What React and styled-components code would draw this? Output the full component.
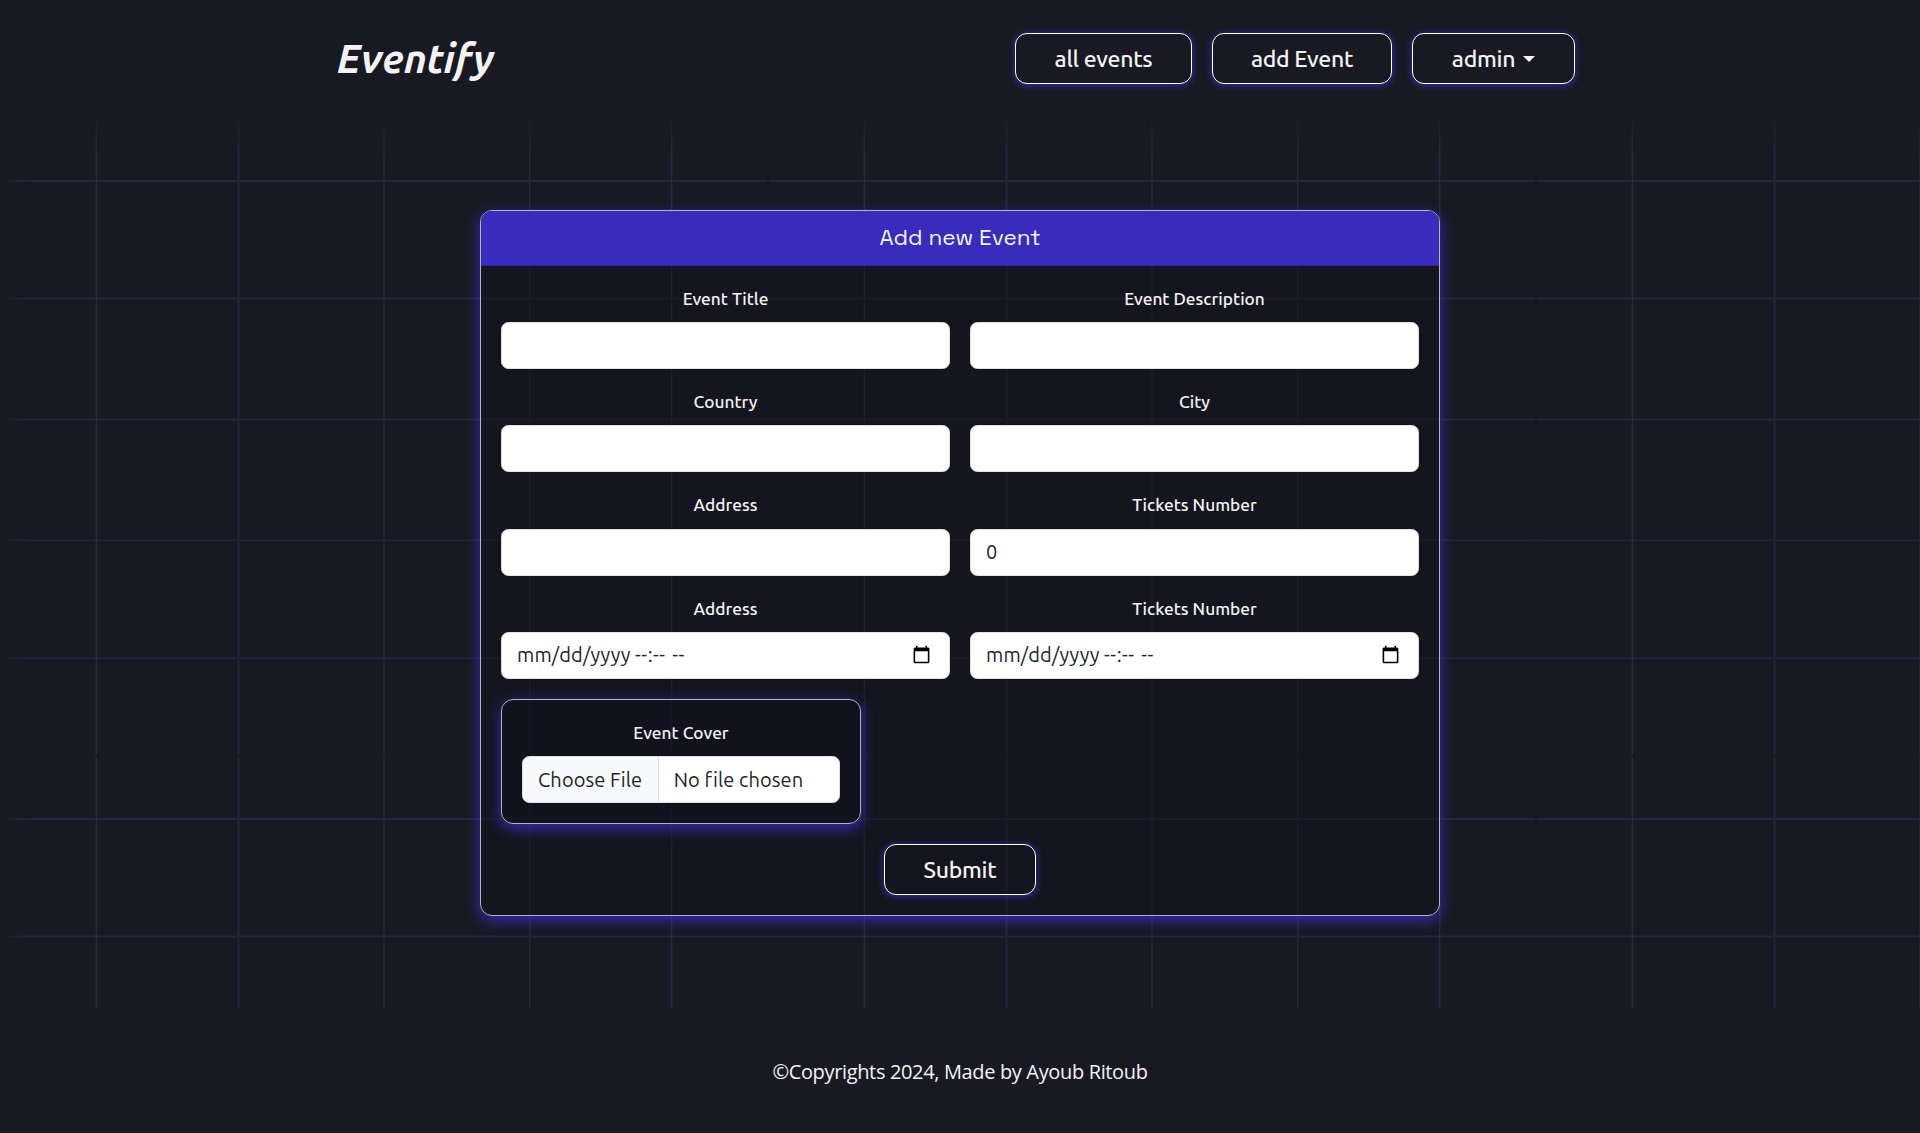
import React from "react";
import styled, { createGlobalStyle } from "styled-components";

const GlobalStyle = createGlobalStyle`
  *, *::before, *::after { box-sizing: border-box; }
  body {
    margin: 0;
    background: #191923;
    color: #f3f3f3;
    font-family: Ubuntu, "Noto Sans", "Open Sans", sans-serif;
    font-size: 20px;
    line-height: 1.5;
  }
`;

const Page = styled.div`
  min-height: 1133px;
  display: flex;
  flex-direction: column;
`;

const Header = styled.header`
  height: 118px;
  padding: 0 345px 1px 337px;
  display: flex;
  align-items: center;
  justify-content: space-between;
`;

const Brand = styled.a`
  font-size: 40.3px;
  font-weight: 700;
  font-style: italic;
  line-height: 1;
`;

const Nav = styled.nav`
  display: flex;
  gap: 20px;
`;

const Button = styled.button`
  width: ${(p) => p.$width}px;
  height: 51px;
  padding: 0;
  display: flex;
  align-items: center;
  justify-content: center;
  gap: 8px;
  background: transparent;
  border: 1px solid #ffffff;
  border-radius: 12px;
  box-shadow: 0 1px 7px #382cbc;
  color: #f3f3f3;
  font: 500 23px/30px Ubuntu, "Noto Sans", "Open Sans", sans-serif;
  letter-spacing: -0.3px;
`;

const Caret = styled.span`
  border-top: 6px solid #f3f3f3;
  border-left: 6px solid transparent;
  border-right: 6px solid transparent;
`;

const strong = "#2b2849";
const medium = "#272541";
const soft = "#1f1e2f";
const band = (dir, start, colors) =>
  `linear-gradient(${dir}, transparent ${start}px, ${colors
    .map((c, i) => `${c} ${start + i}px, ${c} ${start + i + 1}px`)
    .join(", ")}, transparent ${start + colors.length}px)`;
const vLine = (x, ...colors) => band("to right", x, colors);
const hLine = (y, ...colors) => band("to bottom", y, colors);

const gridLines = [
  vLine(95, soft, strong),
  vLine(237, soft, medium, soft),
  vLine(383, "#232037", "#232037"),
  vLine(529, medium, soft),
  vLine(671, strong, soft),
  hLine(62, medium, medium),
  hLine(179, soft, medium, soft),
  hLine(300, soft, medium, soft),
  hLine(421, soft, medium),
  hLine(539, soft, medium),
];

const Main = styled.main`
  height: 890px;
  display: flex;
  justify-content: center;
  align-items: flex-start;
  padding-top: 92px;
  background-image:
    linear-gradient(to bottom, rgba(25, 25, 35, 0.85), rgba(25, 25, 35, 0) 38px),
    linear-gradient(to right, #191923, rgba(25, 25, 35, 0) 30px),
    linear-gradient(to right, #191923 1px, transparent 1px, transparent 767px, #191923 767px),
    linear-gradient(to bottom, #191923 1px, transparent 1px, transparent 637px, #191923 637px),
    ${gridLines.join(", ")};
  background-size: 100% 100%, 100% 100%, 768px 638px, 768px 638px,
    ${gridLines.map(() => "768px 638px").join(", ")};
`;

const Card = styled.form`
  width: 960px;
  height: 706px;
  margin: 0;
  display: flex;
  flex-direction: column;
  border: 1px solid #b4b4b8;
  border-radius: 12px;
  background: rgba(17, 17, 28, 0.5);
  box-shadow: 0 4px 14px #382cbc;
`;

const CardHeader = styled.div`
  height: 55px;
  flex-shrink: 0;
  border-bottom: 1px solid #3025a5;
  border-radius: 11px 11px 0 0;
  background: #382cbc;
  display: flex;
  align-items: center;
  justify-content: center;
  font-family: "Space Grotesk", Inter, "Liberation Sans", sans-serif;
  font-size: 22.5px;
`;

const CardBody = styled.div`
  padding: 19.75px 20px 20px;
  display: flex;
  flex-direction: column;
  align-items: center;
`;

const Fields = styled.div`
  width: 100%;
  display: grid;
  grid-template-columns: 1fr 1fr;
  gap: 20.1px 20px;
`;

const Field = styled.label`
  display: flex;
  flex-direction: column;
  align-items: center;
`;

const Label = styled.span`
  height: 28.25px;
  margin-bottom: 8px;
  font-size: 17.3px;
  font-weight: 500;
  line-height: 25px;
`;

const Input = styled.input`
  width: 100%;
  height: 47px;
  padding: 7px 15px 8px;
  border: 1px solid #dee2e6;
  border-radius: 7.5px;
  background: #fff;
  color: #212529;
  font: 400 20px/30px Ubuntu, "Noto Sans", "Open Sans", sans-serif;
  letter-spacing: 0.1px;
  outline: none;
  appearance: none;

  &::-webkit-inner-spin-button {
    display: none;
  }
`;

const DateBox = styled.div`
  width: 100%;
  height: 47px;
  padding: 0 18px 1px 15px;
  display: flex;
  align-items: center;
  border: 1px solid #dee2e6;
  border-radius: 7.5px;
  background: #fff;
  color: #212529;

  svg {
    margin-left: auto;
    margin-bottom: 1px;
  }
`;

const DatePart = styled.span`
  margin-left: ${(p) => p.$gap || 0}px;
  letter-spacing: ${(p) => (p.$gap ? "0.5px" : "0.15px")};
`;

const CoverBox = styled.div`
  width: 360px;
  height: 125px;
  margin-top: 20px;
  padding: 20px;
  align-self: flex-start;
  border: 1px solid #b4b4b8;
  border-radius: 12px;
  background: rgba(16, 16, 30, 0.5);
  box-shadow: 0 4px 14px #382cbc;
`;

const FileInput = styled(Input)`
  padding: 7.5px 15px;
  overflow: hidden;

  &::file-selector-button {
    padding: 7.5px 16px 7.5px 15px;
    margin: -7.5px 14.5px -7.5px -15px;
    border: 0 solid #dee2e6;
    border-right-width: 1px;
    background: #f8f9fa;
    color: #212529;
    font: inherit;
    letter-spacing: inherit;
  }
`;

const SubmitRow = styled.div`
  margin-top: 20px;
`;

const Footer = styled.footer`
  flex: 1;
  padding-top: 2px;
  display: flex;
  align-items: center;
  justify-content: center;
  font-family: "Segoe UI", "Open Sans", sans-serif;
  font-size: 20px;
  letter-spacing: -0.35px;
`;

const CalendarIcon = () => (
  <svg width="19" height="19" viewBox="0 0 24 24" fill="#000">
    <path d="M20 3h-1V1h-2v2H7V1H5v2H4c-1.1 0-2 .9-2 2v16c0 1.1.9 2 2 2h16c1.1 0 2-.9 2-2V5c0-1.1-.9-2-2-2zm0 18H4V8h16v13z" />
  </svg>
);

const DateInput = () => (
  <DateBox>
    <DatePart>mm/dd/yyyy</DatePart>
    <DatePart $gap={4.5}>--:--</DatePart>
    <DatePart $gap={6.5}>--</DatePart>
    <CalendarIcon />
  </DateBox>
);

const fields = [
  { label: "Event Title", type: "text" },
  { label: "Event Description", type: "text" },
  { label: "Country", type: "text" },
  { label: "City", type: "text" },
  { label: "Address", type: "text" },
  { label: "Tickets Number", type: "number", value: "0" },
  { label: "Address", type: "date" },
  { label: "Tickets Number", type: "date" },
];

export default function App() {
  return (
    <Page>
      <GlobalStyle />
      <Header>
        <Brand>Eventify</Brand>
        <Nav>
          <Button $width={177}>all events</Button>
          <Button $width={180}>add Event</Button>
          <Button $width={163}>admin <Caret /></Button>
        </Nav>
      </Header>
      <Main>
        <Card>
          <CardHeader>Add new Event</CardHeader>
          <CardBody>
            <Fields>
              {fields.map((f, i) => (
                <Field key={i}>
                  <Label>{f.label}</Label>
                  {f.type === "date" ? (
                    <DateInput />
                  ) : (
                    <Input type={f.type} defaultValue={f.value} />
                  )}
                </Field>
              ))}
            </Fields>
            <CoverBox>
              <Field>
                <Label>Event Cover</Label>
                <FileInput type="file" />
              </Field>
            </CoverBox>
            <SubmitRow>
              <Button type="button" $width={152}>Submit</Button>
            </SubmitRow>
          </CardBody>
        </Card>
      </Main>
      <Footer>©Copyrights 2024, Made by Ayoub Ritoub</Footer>
    </Page>
  );
}
